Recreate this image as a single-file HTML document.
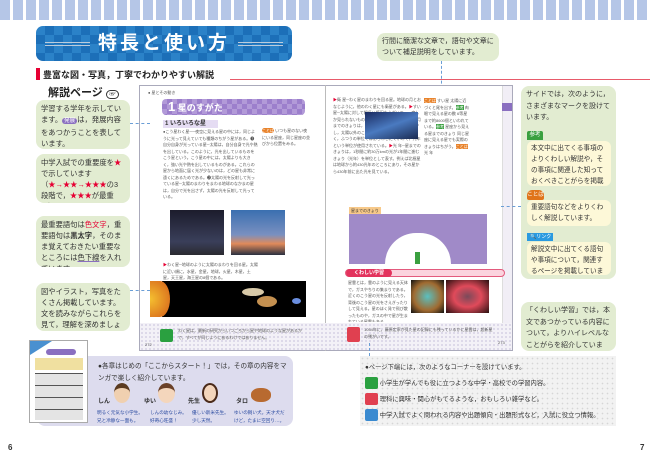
<!DOCTYPE html>
<html><head><meta charset="utf-8"><style>
*{margin:0;padding:0;box-sizing:border-box}
body{width:650px;height:459px;position:relative;overflow:hidden;background:#fff;font-family:"Liberation Sans","Noto Sans CJK JP",sans-serif;color:#333}
.a{position:absolute}
.band{position:absolute;left:0;width:650px;height:20px;background:repeating-linear-gradient(90deg,#b5c6e7 0 10px,#fff 10px 13px)}
.g{position:absolute;background:#e2ecd1;border-radius:8px;font-size:7.3px;line-height:11px;padding:3px 5px;color:#333;overflow:hidden}
.cr{background:#fdf8d8;border-radius:6px;position:absolute;font-size:6.6px;line-height:11px;padding:2px 4px;overflow:hidden}
.t{font-size:4px;line-height:6.5px;color:#555;overflow:hidden;position:absolute}
.dash{position:absolute;border-color:#6a9ed6;border-style:dashed;border-width:0}
.red{color:#e60033}
</style></head><body>
<div class="band" style="top:0"></div>
<div class="band" style="top:439"></div>
<div class="a" style="left:0;top:439px;width:18px;height:20px;background:#fff"></div>
<div class="a" style="left:8px;top:443px;font-size:8px;font-weight:bold">6</div>
<div class="a" style="left:636px;top:439px;width:14px;height:20px;background:#fff"></div>
<div class="a" style="left:640px;top:443px;font-size:8px;font-weight:bold">7</div>

<div class="a" style="left:36px;top:26px;width:256px;height:35px;border-radius:7px;background:repeating-conic-gradient(#1c6fb8 0 25%,#2b82c8 0 50%) 0 0/18px 18px;color:#fff;font-size:19px;font-weight:bold;text-align:center;line-height:35px;letter-spacing:3px">
<span style="display:inline-block;width:45px;border-top:1px solid #bcd;border-bottom:1px solid #bcd;height:4px;vertical-align:middle;margin-right:8px"></span>特長と使い方<span style="display:inline-block;width:45px;border-top:1px solid #bcd;border-bottom:1px solid #bcd;height:4px;vertical-align:middle;margin-left:8px"></span></div>

<div class="a" style="left:36px;top:68px;width:4px;height:12px;background:#e60033"></div>
<div class="a" style="left:43px;top:68px;font-size:9px;font-weight:bold;color:#222">豊富な図・写真，丁寧でわかりやすい解説</div>
<div class="a" style="left:230px;top:79px;width:420px;height:1px;background:#e85a6a"></div>
<div class="a" style="left:48px;top:84px;font-size:11px;font-weight:bold;color:#222">解説ページ <span style="font-size:7px;border:1px solid #333;border-radius:6px;padding:0 2px">☞</span></div>

<div class="g" style="left:36px;top:100px;width:94px;height:49px">学習する学年を示しています。<span style="background:#8a6fc0;color:#fff;border-radius:3px;font-size:5.5px;padding:0 2px">発展</span>は，発展内容をあつかうことを表しています。</div>
<div class="g" style="left:36px;top:154px;width:94px;height:49px">中学入試での重要度を<span class="red">★</span>で示しています（<span class="red">★→★★→★★★</span>の3段階で，<span class="red">★★★</span>が最重要）。</div>
<div class="g" style="left:36px;top:216px;width:94px;height:51px">最重要語句は<span class="red">色文字</span>，重要語句は<b>黒太字</b>，そのまま覚えておきたい重要なところには<u style="text-decoration-color:#8a6fc0">色下線</u>を入れています。</div>
<div class="g" style="left:36px;top:283px;width:94px;height:48px">図やイラスト，写真をたくさん掲載しています。文を読みながらこれらを見て，理解を深めましょう。</div>

<div class="g" style="left:377px;top:33px;width:122px;height:28px;font-size:7px;line-height:11px;padding:3px 5px">行間に簡潔な文章で，語句や文章について補足説明をしています。</div>
<div class="dash" style="left:441px;top:61px;height:52px;border-left-width:1px"></div>

<div class="a" style="left:139px;top:85px;width:374px;height:266px;border:1px solid #aab;background:#fff"></div>
<div class="a" style="left:325px;top:85px;width:1px;height:266px;background:#bbb"></div>
<div class="a" style="left:140px;top:323px;width:372px;height:27px;background:radial-gradient(#c9c3dc 0.7px,#f3f1f7 0.9px) 0 0/4px 4px"></div>
<div class="a" style="left:502px;top:86px;width:10px;height:237px;background:#f1eef6;border-left:1px solid #ddd"></div>
<div class="a" style="left:502px;top:103px;width:10px;height:8px;background:#8a6fc0"></div>
<div class="a" style="left:148px;top:90px;font-size:4px;color:#555">● 星とその動き</div>
<div class="a" style="left:162px;top:99px;width:143px;height:16px;border-radius:4px;background:repeating-conic-gradient(#9c7fcc 0 25%,#b29ad8 0 50%) 0 0/10px 10px;color:#fff;font-size:9px;font-weight:bold;line-height:16px;padding-left:6px"><span style="font-size:13px">1</span> 星のすがた</div>
<div class="a" style="left:163px;top:120px;width:55px;height:8px;background:#e5dcf3;font-size:6px;font-weight:bold;line-height:8px;padding-left:2px">1 いろいろな星</div>
<div class="t" style="left:163px;top:129px;width:95px;height:78px">●こう星わく星──夜空に見える星の中には，同じように光って見えていても種類のちがう星がある。❶自分自身が光っている星─太陽は，自分自身で光や熱を出している。このように，光を出しているものをこう星という。こう星の中には，太陽よりも大きく，強い光や熱を出しているものがある。これらの星から地面に届く光が少ないのは，どの星も非常に遠くにあるためである。❷太陽の光を反射して光っている星─太陽のまわりをまわる地球のなかまの星は，自分で光を出さず，太陽の光を反射して光っている。</div>
<div class="t" style="left:262px;top:128px;width:48px;height:30px"><span style="background:#e8822a;color:#fff;border-radius:3px">ことば</span> いつも星のない夜にいる星座，同じ星座の並びから位置をみる。</div>
<div class="a" style="left:170px;top:210px;width:54px;height:45px;background:linear-gradient(#1c1c2c,#3a3f5a 70%,#2a2a30)"></div>
<div class="a" style="left:231px;top:210px;width:54px;height:45px;background:linear-gradient(#3a6fb0,#7a90c0 55%,#e08a5a 75%,#2a3040)"></div>
<div class="t" style="left:163px;top:262px;width:95px;height:19px"><span class="red">▶</span>わく星─地球のように太陽のまわりを回る星。太陽に近い順に，水星，金星，地球，火星，木星，土星，天王星，海王星の8個である。</div>
<div class="a" style="left:162px;top:281px;width:144px;height:36px;background:#000"></div>
<div class="a" style="left:150px;top:281px;width:20px;height:36px;border-radius:0 50% 50% 0;background:radial-gradient(circle at 0 50%,#f5c030,#d5601a)"></div>
<div class="a" style="left:242px;top:288px;width:22px;height:8px;border-radius:50%;background:#d8c9a8"></div>
<div class="a" style="left:257px;top:296px;width:20px;height:11px;border-radius:50%;background:#c49050"></div>
<div class="a" style="left:292px;top:298px;width:9px;height:6px;border-radius:50%;background:#6a8ee0"></div>
<div class="a" style="left:160px;top:329px;width:13px;height:13px;background:#2aa040;border-radius:2px"></div>
<div class="t" style="left:178px;top:328px;width:130px;height:14px">わく星は，最新の研究からいつごろから星や地球のような星があるかで，すべてが同じようにあるわけではありません。</div>
<div class="t" style="left:145px;top:342px">272</div>

<div class="t" style="left:333px;top:97px;width:88px;height:88px"><span class="red">▶</span>衛 星─わく星のまわりを回る星。地球の月とおなじように，他のわく星にも衛星がある。<span class="red">▶</span>すい星─太陽に対して細長い楕円をえがいて，一度しか見られないものもある。●星までのきょり──月までのきょりは，光の速さで約1秒である。しかし，太陽以外のこう星までのきょりは非常に遠く，ふつうの単位ではあらわしにくいので，光年という単位が使用されている。<span class="red">▶</span>光 年─星までのきょりは，1秒間に約30万kmの光が1年間に進むきょり（光年）を単位として表す。例えば北極星は地球から約430光年のところにあり，その星から430年前に出た光を見ている。</div>
<div class="a" style="left:365px;top:112px;width:53px;height:27px;background:linear-gradient(160deg,#1a2a60,#4a7ac0 50%,#1a2a50)"></div>
<div class="t" style="left:424px;top:98px;width:46px;height:96px"><span style="background:#e8822a;color:#fff">ことば</span> すい星 太陽に近づくと尾を出す。<span style="background:#3aa040;color:#fff">参考</span> 肉眼で見える星の数 6等星まで約8600個といわれている。<span style="background:#3aa040;color:#fff">参考</span> 星座から見える星までのきょり 同じ星座に見える星でも実際のきょりはちがう。<span style="background:#e8822a;color:#fff">ことば</span> 光 年</div>
<div class="a" style="left:349px;top:207px;width:32px;height:7px;background:#f7c98a;font-size:4px;line-height:7px;padding-left:2px">星までのきょり</div>
<div class="a" style="left:349px;top:214px;width:138px;height:50px;background:#a08ac8"></div>
<div class="a" style="left:385px;top:233px;width:66px;height:31px;border-radius:33px 33px 0 0;background:#fff"></div>
<div class="a" style="left:415px;top:252px;width:5px;height:12px;background:#3aa040"></div>
<div class="a" style="left:345px;top:269px;width:160px;height:8px;border-radius:4px;background:#fbd3de;border:1px solid #e35a7d"></div>
<div class="a" style="left:346px;top:269px;width:46px;height:8px;border-radius:4px;background:#e3335d;color:#fff;font-size:5px;font-weight:bold;line-height:8px;text-align:center">くわしい学習</div>
<div class="t" style="left:348px;top:280px;width:60px;height:42px">星雲とは，雲のように見える天体で，ガスやちりの集まりである。近くのこう星の光を反射したり，背後のこう星の光をさえぎったりして見える。星のほく発で飛び散ったものや，ガスの中で星が生まれている星雲もある。</div>
<div class="a" style="left:411px;top:280px;width:33px;height:33px;background:radial-gradient(#5ac0c0,#a06a30 60%,#111)"></div>
<div class="a" style="left:446px;top:280px;width:43px;height:33px;background:radial-gradient(#7a4a5a,#e04a5a 45%,#2a1010)"></div>
<div class="a" style="left:347px;top:327px;width:13px;height:15px;background:#e04050;border-radius:2px"></div>
<div class="t" style="left:364px;top:327px;width:130px;height:14px">1054年に，藤原定家が見た星の記録にも残っているかに星雲は，超新星の残がいです。</div>
<div class="t" style="left:498px;top:340px">273</div>

<div class="dash" style="left:130px;top:123px;width:20px;border-top-width:1px"></div>
<div class="dash" style="left:130px;top:290px;width:20px;border-top-width:1px"></div>
<div class="dash" style="left:501px;top:206px;width:20px;border-top-width:1px"></div>

<div class="g" style="left:521px;top:86px;width:95px;height:193px;padding:3px 5px;font-size:7px;line-height:11.5px">サイドでは，次のように，さまざまなマークを設けています。</div>
<div class="a" style="left:527px;top:131px;width:16px;height:9px;background:#3aa040;color:#fff;font-size:5.5px;text-align:center;line-height:9px;border-radius:2px 2px 0 0">参考</div>
<div class="cr" style="left:527px;top:141px;width:84px;height:45px">本文中に出てくる事項のよりくわしい解説や，その事項に関連した知っておくべきことがらを掲載しています。</div>
<div class="a" style="left:527px;top:190px;width:17px;height:10px;background:#e0741a;color:#fff;font-size:5.5px;text-align:center;line-height:10px;border-radius:5px 5px 2px 2px">ことば</div>
<div class="cr" style="left:527px;top:200px;width:84px;height:26px">重要語句などをよりくわしく解説しています。</div>
<div class="a" style="left:527px;top:233px;width:26px;height:8px;background:#2a9ae0;color:#fff;font-size:5px;line-height:8px;padding-left:3px">🔍リンク</div>
<div class="cr" style="left:527px;top:242px;width:84px;height:33px">解説文中に出てくる語句や事項について，関連するページを掲載しています。</div>
<div class="g" style="left:521px;top:302px;width:95px;height:49px;padding:3px 5px;font-size:7px;line-height:11.5px">「くわしい学習」では，本文であつかっている内容について，よりハイレベルなことがらを紹介しています。</div>

<div class="a" style="left:37px;top:356px;width:256px;height:70px;border-radius:8px;background:#dddcee"></div>
<div class="a" style="left:29px;top:340px;width:59px;height:83px;background:#fff;border:1px solid #aaa;overflow:hidden">
<div class="a" style="left:0;top:0;width:22px;height:14px;background:#4a90d0;clip-path:polygon(0 0,100% 0,0 100%)"></div>
<div class="a" style="left:16px;top:8px;width:30px;height:6px;background:#8a6fc0;border-radius:3px"></div>
<div class="a" style="left:5px;top:17px;width:48px;height:12px;background:#f0e0a0"></div>
<div class="a" style="left:5px;top:32px;width:48px;height:47px;background:repeating-linear-gradient(#555 0 1px,#e4e4e4 1px 12px)"></div>
</div>
<div class="a" style="left:98px;top:361px;font-size:6.6px;line-height:12px;width:194px">●各章はじめの「ここからスタート！」では，その章の内容をマンガで楽しく紹介しています。</div>
<div class="a" style="left:98px;top:396px;font-size:6px;font-weight:bold">しん</div>
<div class="a" style="left:114px;top:383px;width:16px;height:20px;border-radius:50%;background:#f0d0b0;border-top:5px solid #5a3a20"></div>
<div class="a" style="left:144px;top:396px;font-size:6px;font-weight:bold">ゆい</div>
<div class="a" style="left:158px;top:383px;width:17px;height:20px;border-radius:50%;background:#f4d6bc;border-top:5px solid #6a4028"></div>
<div class="a" style="left:188px;top:396px;font-size:6px;font-weight:bold">先生</div>
<div class="a" style="left:202px;top:383px;width:16px;height:20px;border-radius:50%;background:#f4d6bc;border:2px solid #4a2a1a"></div>
<div class="a" style="left:236px;top:396px;font-size:6px;font-weight:bold">タロ</div>
<div class="a" style="left:251px;top:388px;width:20px;height:14px;border-radius:45%;background:#b86a30"></div>
<div class="a" style="left:97px;top:409px;font-size:4.6px;line-height:7.5px;color:#2a4aa0;width:200px;white-space:nowrap">
<span class="a" style="left:0">明るく元気な小学生。<br>兄と冷静な一面も。</span>
<span class="a" style="left:53px">しんの幼なじみ。<br>好奇心旺盛！</span>
<span class="a" style="left:95px">優しい新米先生。<br>少し天然。</span>
<span class="a" style="left:137px">ゆいの飼い犬。天才犬だ<br>けど，たまに空回り…。</span></div>

<div class="a" style="left:360px;top:356px;width:256px;height:70px;background:radial-gradient(#d6d6d6 0.7px,#f2f2f2 0.9px) 0 0/5px 5px"></div>
<div class="dash" style="left:369px;top:343px;height:13px;border-left-width:1px"></div>
<div class="a" style="left:365px;top:360px;font-size:6.3px;line-height:16px;width:252px;white-space:nowrap">●ページ下端には，次のようなコーナーを設けています。<br>
<span style="display:inline-block;width:13px;height:12px;background:#2aa040;vertical-align:middle;border-radius:2px"></span> 小学生が学んでも役に立つような中学・高校での学習内容。<br>
<span style="display:inline-block;width:13px;height:12px;background:#e04050;vertical-align:middle;border-radius:2px"></span> 理科に興味・関心がもてるような，おもしろい雑学など。<br>
<span style="display:inline-block;width:13px;height:12px;background:#3a8ad0;vertical-align:middle;border-radius:2px"></span> 中学入試でよく問われる内容や出題傾向・出題形式など，入試に役立つ情報。</div>
</body></html>
